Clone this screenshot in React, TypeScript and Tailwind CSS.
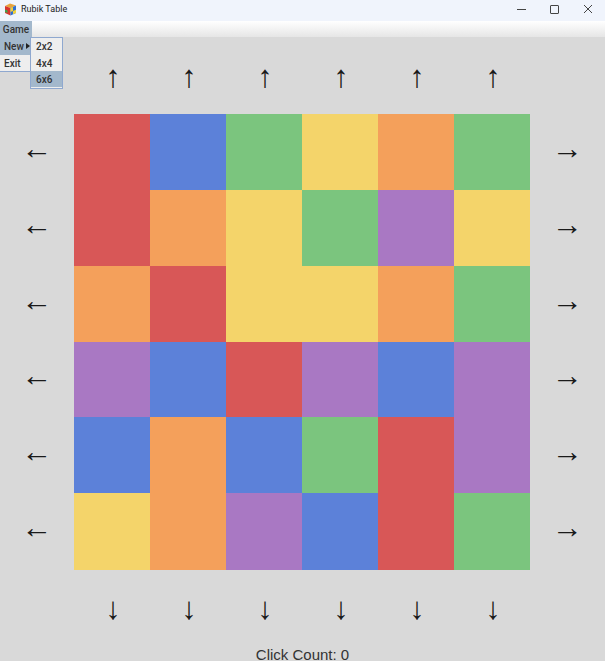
const R = "bg-[#d85757]";
const B = "bg-[#5c81d9]";
const G = "bg-[#7bc57e]";
const Y = "bg-[#f4d46a]";
const O = "bg-[#f4a05b]";
const P = "bg-[#a978c3]";

const board = [
  [R, B, G, Y, O, G],
  [R, O, Y, G, P, Y],
  [O, R, Y, Y, O, G],
  [P, B, R, P, B, P],
  [B, O, B, G, R, P],
  [Y, O, P, B, R, G],
];

const arrowText =
  "flex items-center justify-center font-['Liberation_Sans',sans-serif] text-[31px] leading-none text-[#1a1a1a]";

const UpArrow = () => <div className={`${arrowText} pl-[2px] pt-[2px]`}>↑</div>;

const DownArrow = () => <div className={`${arrowText} pl-[2px] pb-[4px]`}>↓</div>;

const HArrow = ({ glyph }: { glyph: string }) => (
  <div className={`${arrowText} pb-[8px]`}>{glyph}</div>
);

const CubeIcon = () => (
  <svg width="13" height="13" viewBox="0 0 13 13">
    <path d="M1 3l5-2.500 6 2-5.500 2.500z" fill="#e8a33a" />
    <path d="M1 3l5.500 2v7.500L1 10z" fill="#d8352f" />
    <path d="M6.500 5L12 2.500V10l-5.500 2.500z" fill="#2f6fd0" />
    <path d="M6.500 5L9 4v4l-2.500 1z" fill="#f2d23c" />
    <path d="M9 8l3-1.200V10l-3 1.300z" fill="#f2d23c" />
    <path d="M1 6.500l2.500 1V10L1 9z" fill="#3fa34d" />
  </svg>
);

export default function App() {
  return (
    <div className="relative flex h-[661px] w-[605px] flex-col overflow-hidden bg-[#d9d9d9] font-['Roboto',sans-serif]">
      {/* Title bar */}
      <div className="flex h-[21px] items-center justify-between bg-[#f0f4fc] pb-[3px]">
        <div className="flex items-center gap-[4px] pl-[4px]">
          <CubeIcon />
          <span className="pt-[1px] text-[9px] text-[#222]">Rubik Table</span>
        </div>
        <div className="flex items-center gap-[24px] pr-[12px]">
          <div className="h-px w-[9px] bg-[#444]" />
          <div className="h-[9px] w-[9px] rounded-[1px] border border-[#444]" />
          <svg width="10" height="10" viewBox="0 0 10 10" stroke="#444" strokeWidth="1">
            <path d="M1 1l8 8M9 1l-8 8" />
          </svg>
        </div>
      </div>

      {/* Menu bar */}
      <div className="flex h-[16px] bg-gradient-to-b from-white to-[#e6e6e6]">
        <div className="flex w-[32px] items-center justify-center bg-[#a3b8cc] text-[10px] font-medium text-[#333]">
          Game
        </div>
      </div>

      {/* Game board */}
      <div className="grid flex-1 grid-cols-[74px_repeat(6,76px)_75px] grid-rows-[77px_76px_76px_76px_75px_76px_77px_80px]">
        <div />
        {board[0].map((_, i) => (
          <UpArrow key={i} />
        ))}
        <div />
        {board.map((row, r) => (
          <div key={r} className="contents">
            <HArrow glyph="←" />
            {row.map((color, c) => (
              <div key={c} className={color} />
            ))}
            <HArrow glyph="→" />
          </div>
        ))}
        <div />
        {board[0].map((_, i) => (
          <DownArrow key={i} />
        ))}
        <div />
      </div>

      <div className="absolute bottom-0 left-0 w-full text-center font-['Liberation_Sans',sans-serif] text-[15px] leading-[13px] text-[#333]">
        Click Count: 0
      </div>

      {/* Open menus */}
      <div className="absolute left-0 top-[37px] flex h-[35px] w-[31px] flex-col border-b border-[#8fa8cf] bg-[#eeeeee] text-[10px] font-medium text-[#333]">
        <div className="flex h-[18px] items-center justify-between bg-[#a3b8cc] pl-[4px] pr-[1px]">
          New
          <span className="h-0 w-0 border-y-[3px] border-l-[4px] border-y-transparent border-l-[#222]" />
        </div>
        <div className="flex h-[16px] items-center pl-[4px]">Exit</div>
      </div>
      <div className="absolute left-[30px] top-[37px] flex h-[52px] w-[33px] flex-col border border-[#8fa8cf] bg-[#eeeeee] pb-[1px] text-[10px] font-medium text-[#333]">
        <div className="flex h-[17px] items-center pl-[5px]">2x2</div>
        <div className="flex h-[16px] items-center pl-[5px]">4x4</div>
        <div className="flex h-[16px] items-center bg-[#a3b8cc] pl-[5px]">6x6</div>
      </div>
    </div>
  );
}
